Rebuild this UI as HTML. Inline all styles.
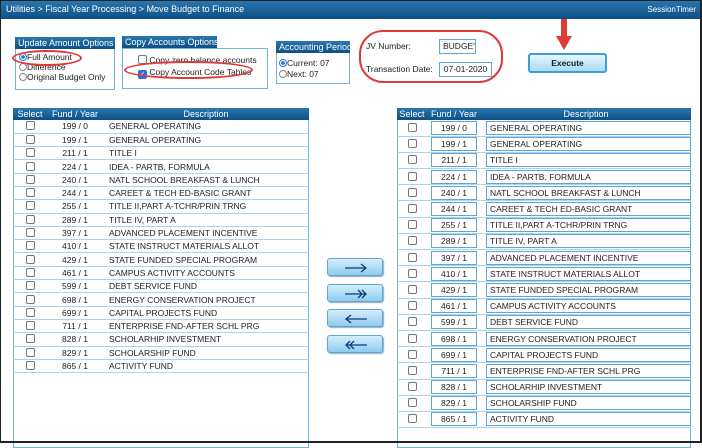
<!DOCTYPE html>
<html><head><meta charset="utf-8"><style>
*{box-sizing:border-box;margin:0;padding:0}
body{width:702px;height:443px;overflow:hidden;background:#fff;font-family:"Liberation Sans",sans-serif;font-size:8px;color:#222;position:relative}
.frame{position:absolute;left:0;top:0;width:702px;height:443px;border:1px solid #222;border-right:2px solid #222;border-bottom:2px solid #222;z-index:20;pointer-events:none}
.hdr{position:absolute;left:0;top:0;width:702px;height:19px;background:linear-gradient(#2a78b0,#0d4f86);color:#fff;font-size:9px;line-height:19px;padding-left:6px}
.hdr span{position:absolute;right:6px;top:0;font-size:8px}
.ab{position:absolute}
.box{position:absolute;border:1px solid #6cb3e0}
.bt{position:absolute;background:linear-gradient(#2a78b0,#0d4f86);color:#fff;font-size:9px;line-height:12px;padding:0 3px;white-space:nowrap}
.rad{display:inline-block;width:8px;height:8px;border:1px solid #888;border-radius:50%;vertical-align:-1px;background:#fff}
.rad.on{border-color:#2a7ad0;background:radial-gradient(#2a7ad0 40%,#fff 50%)}
.cb{display:inline-block;width:9px;height:9px;border:1px solid #777;border-radius:2px;background:#fff;vertical-align:-1px}
.oval{position:absolute;border:2px solid #e0393a;border-radius:50%}
table{border-collapse:collapse}
.lt{position:absolute;left:13px;top:108px;width:296px}
.lt th,.rt th{background:linear-gradient(#2a78b0,#0d4f86);color:#fff;font-weight:normal;font-size:9px;height:12px;line-height:12px}
.lt td{height:13.3px;border-bottom:1px solid #a8d6f0;font-size:8.5px;line-height:12px;white-space:nowrap}
.lt td:nth-child(1){text-align:center;width:34px}
.lt td:nth-child(2){text-align:center;width:56px}
.lt td:nth-child(3){padding-left:6px}
.rt{position:absolute;left:397px;top:108px;width:294px}
.rt td{height:16.2px;border-bottom:1px solid #a8d6f0;font-size:8.5px;white-space:nowrap}
.rt td:nth-child(1){text-align:center;width:30px}
.rt td:nth-child(2){width:54px;padding-left:4px}
.rt td:nth-child(3){padding-left:5px}
.in{display:block;border:1px solid #5ba8d8;height:14px;line-height:12px;padding-left:3px;background:#fff}
.rt td:nth-child(2) .in{width:46px;text-align:center;padding:0}
.abtn{position:absolute;left:327px;width:56px;height:18px;border:1px solid #5aa6d6;border-radius:3px;background:linear-gradient(#d6eefb,#8fcbee);box-shadow:1px 1px 1px #9ab}
.abtn svg{position:absolute;left:16px;top:4px}
</style></head><body>
<div class="hdr">Utilities &gt; Fiscal Year Processing &gt; Move Budget to Finance<span>SessionTimer</span></div>

<div class="box" style="left:15px;top:48px;width:100px;height:42px"></div>
<div class="bt" style="left:15px;top:37px;width:100px">Update Amount Options</div>
<div class="ab" style="left:19px;top:52px;line-height:10px;font-size:8.5px"><span class="rad on"></span>Full Amount<br><span class="rad"></span>Difference<br><span class="rad"></span>Original Budget Only</div>
<div class="oval" style="left:12px;top:50px;width:70px;height:16px"></div>

<div class="box" style="left:122px;top:48px;width:146px;height:41px"></div>
<div class="bt" style="left:122px;top:36px;width:95px">Copy Accounts Options</div>
<div class="ab" style="left:138px;top:54px;line-height:12px;font-size:8.5px"><span class="cb"></span> Copy zero balance accounts<br><span class="cb" style="background:#2a6fd0;border-color:#2a6fd0;color:#fff;font-size:7px;line-height:7px;text-align:center">✓</span> Copy Account Code Tables</div>
<div class="oval" style="left:124px;top:61px;width:129px;height:18px"></div>

<div class="box" style="left:276px;top:52px;width:74px;height:32px"></div>
<div class="bt" style="left:276px;top:41px;width:74px">Accounting Period</div>
<div class="ab" style="left:279px;top:58px;line-height:11px;font-size:8.5px"><span class="rad on"></span>Current: 07<br><span class="rad"></span>Next: 07</div>

<div class="oval" style="left:359px;top:30px;width:144px;height:53px;border-radius:24px"></div>
<div class="ab" style="left:366px;top:41px;font-size:8.5px">JV Number:</div>
<div class="ab in" style="left:439px;top:39px;width:37px;height:15px;border-width:1px;font-size:8.5px">BUDGE'</div>
<div class="ab" style="left:366px;top:64px;font-size:8.5px">Transaction Date:</div>
<div class="ab in" style="left:439px;top:62px;width:53px;height:15px;text-align:center;padding:0;line-height:13px;font-size:8.5px">07-01-2020</div>

<div class="ab" style="left:528px;top:53px;width:79px;height:20px;border:2px solid #3aa0d8;border-radius:3px;background:linear-gradient(#e8f6fd,#a8dbf4);text-align:center;font-weight:bold;font-size:8.5px;line-height:16px;color:#123">Execute</div>
<div class="ab" style="left:561px;top:19px;width:6px;height:20px;background:#e0393a"></div>
<div class="ab" style="left:556px;top:36px;width:0;height:0;border-left:8px solid transparent;border-right:8px solid transparent;border-top:14px solid #e0393a"></div>

<div class="box" style="left:13px;top:108px;width:296px;height:340px"></div>
<table class="lt"><tr><th>Select</th><th>Fund / Year</th><th>Description</th></tr>
<tr><td><span class="cb"></span></td><td>199 / 0</td><td>GENERAL OPERATING</td></tr>
<tr><td><span class="cb"></span></td><td>199 / 1</td><td>GENERAL OPERATING</td></tr>
<tr><td><span class="cb"></span></td><td>211 / 1</td><td>TITLE I</td></tr>
<tr><td><span class="cb"></span></td><td>224 / 1</td><td>IDEA - PARTB, FORMULA</td></tr>
<tr><td><span class="cb"></span></td><td>240 / 1</td><td>NATL SCHOOL BREAKFAST &amp; LUNCH</td></tr>
<tr><td><span class="cb"></span></td><td>244 / 1</td><td>CAREET &amp; TECH ED-BASIC GRANT</td></tr>
<tr><td><span class="cb"></span></td><td>255 / 1</td><td>TITLE II,PART A-TCHR/PRIN TRNG</td></tr>
<tr><td><span class="cb"></span></td><td>289 / 1</td><td>TITLE IV, PART A</td></tr>
<tr><td><span class="cb"></span></td><td>397 / 1</td><td>ADVANCED PLACEMENT INCENTIVE</td></tr>
<tr><td><span class="cb"></span></td><td>410 / 1</td><td>STATE INSTRUCT MATERIALS ALLOT</td></tr>
<tr><td><span class="cb"></span></td><td>429 / 1</td><td>STATE FUNDED SPECIAL PROGRAM</td></tr>
<tr><td><span class="cb"></span></td><td>461 / 1</td><td>CAMPUS ACTIVITY ACCOUNTS</td></tr>
<tr><td><span class="cb"></span></td><td>599 / 1</td><td>DEBT SERVICE FUND</td></tr>
<tr><td><span class="cb"></span></td><td>698 / 1</td><td>ENERGY CONSERVATION PROJECT</td></tr>
<tr><td><span class="cb"></span></td><td>699 / 1</td><td>CAPITAL PROJECTS FUND</td></tr>
<tr><td><span class="cb"></span></td><td>711 / 1</td><td>ENTERPRISE FND-AFTER SCHL PRG</td></tr>
<tr><td><span class="cb"></span></td><td>828 / 1</td><td>SCHOLARHIP INVESTMENT</td></tr>
<tr><td><span class="cb"></span></td><td>829 / 1</td><td>SCHOLARSHIP FUND</td></tr>
<tr><td><span class="cb"></span></td><td>865 / 1</td><td>ACTIVITY FUND</td></tr>
</table>

<div class="abtn" style="top:258px"><svg width="24" height="10"><path d="M1 5H22M17 1L22 5L17 9" stroke="#123a7a" stroke-width="1.3" fill="none"/></svg></div>
<div class="abtn" style="top:284px"><svg width="24" height="10"><path d="M1 5H22M14 1L18 5L14 9M18 1L22 5L18 9" stroke="#123a7a" stroke-width="1.3" fill="none"/></svg></div>
<div class="abtn" style="top:309px"><svg width="24" height="10"><path d="M2 5H23M7 1L2 5L7 9" stroke="#123a7a" stroke-width="1.3" fill="none"/></svg></div>
<div class="abtn" style="top:335px"><svg width="24" height="10"><path d="M2 5H23M6 1L2 5L6 9M10 1L6 5L10 9" stroke="#123a7a" stroke-width="1.3" fill="none"/></svg></div>

<div class="box" style="left:397px;top:108px;width:294px;height:340px"></div>
<table class="rt"><tr><th>Select</th><th>Fund / Year</th><th>Description</th></tr>
<tr><td><span class="cb"></span></td><td><span class="in">199 / 0</span></td><td><span class="in">GENERAL OPERATING</span></td></tr>
<tr><td><span class="cb"></span></td><td><span class="in">199 / 1</span></td><td><span class="in">GENERAL OPERATING</span></td></tr>
<tr><td><span class="cb"></span></td><td><span class="in">211 / 1</span></td><td><span class="in">TITLE I</span></td></tr>
<tr><td><span class="cb"></span></td><td><span class="in">224 / 1</span></td><td><span class="in">IDEA - PARTB, FORMULA</span></td></tr>
<tr><td><span class="cb"></span></td><td><span class="in">240 / 1</span></td><td><span class="in">NATL SCHOOL BREAKFAST &amp; LUNCH</span></td></tr>
<tr><td><span class="cb"></span></td><td><span class="in">244 / 1</span></td><td><span class="in">CAREET &amp; TECH ED-BASIC GRANT</span></td></tr>
<tr><td><span class="cb"></span></td><td><span class="in">255 / 1</span></td><td><span class="in">TITLE II,PART A-TCHR/PRIN TRNG</span></td></tr>
<tr><td><span class="cb"></span></td><td><span class="in">289 / 1</span></td><td><span class="in">TITLE IV, PART A</span></td></tr>
<tr><td><span class="cb"></span></td><td><span class="in">397 / 1</span></td><td><span class="in">ADVANCED PLACEMENT INCENTIVE</span></td></tr>
<tr><td><span class="cb"></span></td><td><span class="in">410 / 1</span></td><td><span class="in">STATE INSTRUCT MATERIALS ALLOT</span></td></tr>
<tr><td><span class="cb"></span></td><td><span class="in">429 / 1</span></td><td><span class="in">STATE FUNDED SPECIAL PROGRAM</span></td></tr>
<tr><td><span class="cb"></span></td><td><span class="in">461 / 1</span></td><td><span class="in">CAMPUS ACTIVITY ACCOUNTS</span></td></tr>
<tr><td><span class="cb"></span></td><td><span class="in">599 / 1</span></td><td><span class="in">DEBT SERVICE FUND</span></td></tr>
<tr><td><span class="cb"></span></td><td><span class="in">698 / 1</span></td><td><span class="in">ENERGY CONSERVATION PROJECT</span></td></tr>
<tr><td><span class="cb"></span></td><td><span class="in">699 / 1</span></td><td><span class="in">CAPITAL PROJECTS FUND</span></td></tr>
<tr><td><span class="cb"></span></td><td><span class="in">711 / 1</span></td><td><span class="in">ENTERPRISE FND-AFTER SCHL PRG</span></td></tr>
<tr><td><span class="cb"></span></td><td><span class="in">828 / 1</span></td><td><span class="in">SCHOLARHIP INVESTMENT</span></td></tr>
<tr><td><span class="cb"></span></td><td><span class="in">829 / 1</span></td><td><span class="in">SCHOLARSHIP FUND</span></td></tr>
<tr><td><span class="cb"></span></td><td><span class="in">865 / 1</span></td><td><span class="in">ACTIVITY FUND</span></td></tr>
</table>
<div class="frame"></div>
</body></html>
